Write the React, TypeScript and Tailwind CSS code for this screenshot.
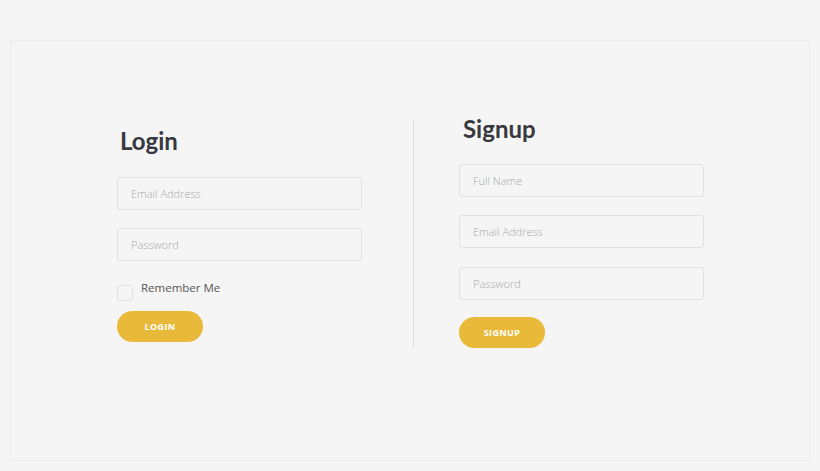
import { useState } from 'react';

function Field({ placeholder, type = 'text', className = '' }: { placeholder: string; type?: string; className?: string }) {
  return (
    <input
      type={type}
      placeholder={placeholder}
      className={`block w-[245px] h-[33px] rounded-[3px] border border-[#e1e1e1] bg-[#f5f5f5] px-[13px] text-[11px] font-light text-[#555] placeholder:text-[#a9a9a9] outline-none font-['Open_Sans',sans-serif] ${className}`}
    />
  );
}

function PillButton({ label }: { label: string }) {
  return (
    <button className="h-[31px] w-[86px] rounded-full bg-[#e9b93a] text-[9px] font-bold tracking-[0.04em] text-white font-['Open_Sans',sans-serif]">
      {label}
    </button>
  );
}

export default function App() {
  const [remember, setRemember] = useState(false);

  return (
    <div className="h-[471px] w-[820px] bg-[#f5f5f5] pt-[40px] pl-[10px] pr-[10px] pb-[10px]">
      <div className="flex h-[421px] w-[800px] items-start border border-[#ebebeb] pl-[106px] pt-[79px]">
        {/* login */}
        <div className="mt-[5px] w-[245px]">
          <h2 className="ml-[3px] h-[32px] text-[24px] font-bold leading-[32px] text-[#383840] font-['Lato',sans-serif]">
            Login
          </h2>
          <Field placeholder="Email Address" className="mt-[20px]" />
          <Field placeholder="Password" type="password" className="mt-[18px]" />
          <label className="mt-[18px] flex items-start gap-[8px] font-['Open_Sans',sans-serif]">
            <span
              onClick={() => setRemember(!remember)}
              className={`mt-[6px] h-[16px] w-[16px] rounded-[3px] border border-[#e1e1e1] ${remember ? 'bg-[#e9b93a]' : 'bg-[#f5f5f5]'}`}
            />
            <span className="text-[11.5px] leading-[18px] text-[#555]">Remember Me</span>
          </label>
          <div className="mt-[10px]">
            <PillButton label="LOGIN" />
          </div>
        </div>

        {/* divider */}
        <div className="ml-[51px] h-[229px] w-px bg-[#dedede]" />

        {/* signup */}
        <div className="ml-[45px] mt-[-7px] w-[245px]">
          <h2 className="ml-[4px] h-[32px] text-[24px] font-bold leading-[32px] text-[#383840] font-['Lato',sans-serif]">
            Signup
          </h2>
          <Field placeholder="Full Name" className="mt-[19px]" />
          <Field placeholder="Email Address" className="mt-[18px]" />
          <Field placeholder="Password" type="password" className="mt-[19px]" />
          <div className="mt-[17px]">
            <PillButton label="SIGNUP" />
          </div>
        </div>
      </div>
    </div>
  );
}
